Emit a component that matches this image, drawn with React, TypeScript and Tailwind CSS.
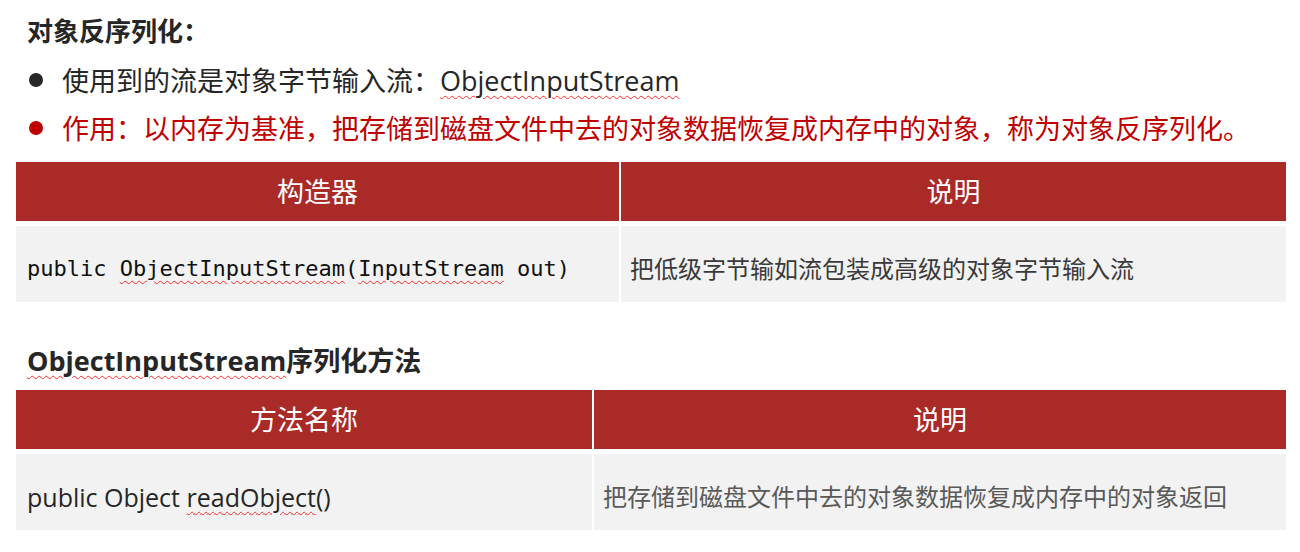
const sans = "font-['Open_Sans','Noto_Sans_CJK_SC',sans-serif]";
const squiggle = "underline decoration-wavy decoration-[#ff2a2a] decoration-1 underline-offset-[4px]";

function Bullet({ color, text, children }: { color: string; text: string; children: React.ReactNode }) {
  return (
    <div className={`flex items-center h-[28px] pl-[13px] ${text}`}>
      <span className={`w-[14px] h-[14px] rounded-full shrink-0 ${color}`} />
      <span className="ml-[19px] text-[27px] leading-none whitespace-nowrap">{children}</span>
    </div>
  );
}

export default function App() {
  return (
    <div className={`w-[1300px] h-[552px] bg-white px-[16px] flex flex-col ${sans}`}>
      <div className="mt-[17px] h-[28px] flex items-center pl-[11px] text-[26px] font-bold text-[#262626] leading-none">
        对象反序列化：
      </div>

      <div className="mt-[21px]">
        <Bullet color="bg-[#262626]" text="text-[#262626]">
          使用到的流是对象字节输入流：<span className={squiggle}>ObjectInputStream</span>
        </Bullet>
      </div>
      <div className="mt-[20px]">
        <Bullet color="bg-[#c00000]" text="text-[#c00000]">
          作用：以内存为基准，把存储到磁盘文件中去的对象数据恢复成内存中的对象，称为对象反序列化。
        </Bullet>
      </div>

      {/* 构造器 */}
      <div className="mt-[20px] w-[1270px] flex flex-col gap-[5px]">
        <div className="flex h-[59px] gap-[2px] text-white text-[27px] leading-none">
          <div className="w-[603px] bg-[#a92a27] flex items-center justify-center">构造器</div>
          <div className="flex-1 bg-[#a92a27] flex items-center justify-center">说明</div>
        </div>
        <div className="flex h-[76px] gap-[2px]">
          <div className="w-[603px] bg-[#f2f2f2] flex items-center pl-[11px] pt-[9px] font-['DejaVu_Sans_Mono',monospace] text-[22px] text-[#111] leading-none whitespace-nowrap">
            public&nbsp;<span className={squiggle}>ObjectInputStream</span>(<span className={squiggle}>InputStream</span>&nbsp;out)
          </div>
          <div className="flex-1 bg-[#f2f2f2] flex items-center pl-[9px] pt-[9px] text-[24px] text-[#3a3a3a] leading-none whitespace-nowrap">
            把低级字节输如流包装成高级的对象字节输入流
          </div>
        </div>
      </div>

      <div className="mt-[44px] h-[28px] flex items-center pl-[11px] text-[27px] font-bold text-[#262626] leading-none whitespace-nowrap">
        <span className={squiggle}>ObjectInputStream</span>序列化方法
      </div>

      {/* 方法 */}
      <div className="mt-[16px] w-[1270px] flex flex-col gap-[5px]">
        <div className="flex h-[59px] gap-[2px] text-white text-[27px] leading-none">
          <div className="w-[576px] bg-[#a92a27] flex items-center justify-center">方法名称</div>
          <div className="flex-1 bg-[#a92a27] flex items-center justify-center">说明</div>
        </div>
        <div className="flex h-[76px] gap-[2px]">
          <div className="w-[576px] bg-[#f2f2f2] flex items-center pl-[11px] pt-[10px] text-[25px] text-[#262626] leading-none whitespace-nowrap">
            public Object&nbsp;<span className={squiggle}>readObject</span>()
          </div>
          <div className="flex-1 bg-[#f2f2f2] flex items-center pl-[9px] pt-[10px] text-[24px] text-[#595959] leading-none whitespace-nowrap">
            把存储到磁盘文件中去的对象数据恢复成内存中的对象返回
          </div>
        </div>
      </div>
    </div>
  );
}
